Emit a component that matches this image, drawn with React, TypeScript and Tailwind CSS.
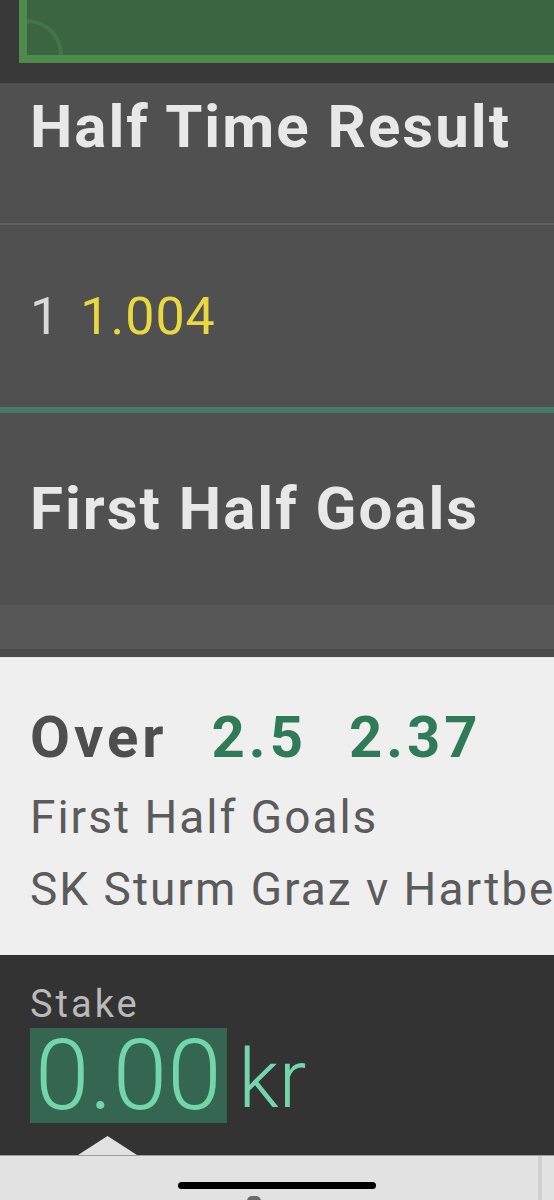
import React from 'react';

const font = { fontFamily: 'Roboto, "Noto Sans", sans-serif' };

function PitchStrip() {
  return (
    <div className="h-[83px] bg-[#383838] pl-[19px]">
      <div className="relative h-[63px] overflow-hidden border-b-[8px] border-l-[8px] border-[#4e8a4a] bg-[#3b6540]">
        <svg className="absolute left-0 bottom-0" width="40" height="40" viewBox="0 0 40 40">
          <path d="M0 6 A34 34 0 0 1 34 40" fill="none" stroke="#46744a" strokeWidth="4" />
        </svg>
      </div>
    </div>
  );
}

function MarketHeader({ title, className }: { title: string; className: string }) {
  return (
    <div className={`px-[30px] ${className}`}>
      <h2 className="text-[60px] leading-[60px] font-bold tracking-[2px] text-[#e8e8e8] whitespace-nowrap">{title}</h2>
    </div>
  );
}

export default function App() {
  return (
    <div className="relative h-[1200px] w-full overflow-hidden bg-[#505050]" style={font}>
      <PitchStrip />

      <MarketHeader title="Half Time Result" className="h-[140px] pt-[14px]" />
      <div className="h-[2px] bg-[#5f5f5f]" />

      <div className="h-[182px] px-[30px] pt-[66px]">
        <p className="text-[52px] leading-[52px] tracking-[1px] whitespace-nowrap">
          <span className="text-[#d9d9d9]">1</span>
          <span className="ml-[20px] text-[#e9d83f]">1.004</span>
        </p>
      </div>
      <div className="h-[6px] bg-[#477b69]" />

      <MarketHeader title="First Half Goals" className="h-[192px] pt-[66px]" />
      <div className="h-[44px] bg-[#575757]" />
      <div className="h-[8px] bg-[#4a4a4a]" />

      {/* bet slip selection */}
      <div className="h-[298px] overflow-hidden border-t border-[#e4e4e4] bg-[#efefef] px-[30px] pt-[50px]">
        <div className="flex items-baseline whitespace-nowrap text-[58px] leading-[58px] font-bold tracking-[4px]">
          <span className="text-[#4e4e4e]">Over</span>
          <span className="ml-[44px] text-[#2f7a57]">2.5</span>
          <span className="ml-[42px] text-[#2f7a57]">2.37</span>
        </div>
        <p className="mt-[15px] text-[46px] leading-[72px] tracking-[2px] text-[#5b5b5b] whitespace-nowrap">First Half Goals</p>
        <p className="text-[46px] leading-[72px] tracking-[2px] text-[#5b5b5b] whitespace-nowrap">SK Sturm Graz v Hartberg</p>
      </div>

      {/* stake input */}
      <div className="relative h-[200px] border-t border-[#2a2a2a] bg-[#333333] px-[30px] pt-[29px]">
        <p className="text-[38px] leading-[38px] tracking-[3px] text-[#b9b9b9]">Stake</p>
        <div className="mt-[5px] flex items-end">
          <span className="bg-[#356651] px-[5px] text-[98px] leading-[95px] font-light text-[#72d6aa]">0.00</span>
          <span className="ml-[12px] mb-[3px] text-[82px] leading-[82px] font-light text-[#72d6aa]">kr</span>
        </div>
        <svg className="absolute left-[78px] bottom-0" width="59" height="19" viewBox="0 0 59 19">
          <polygon points="0,19 29.5,0 59,19" fill="#e2e2e2" />
        </svg>
      </div>

      {/* keyboard top */}
      <div className="relative h-[45px] border-t border-[#9e9e9e] bg-[#e2e2e2]">
        <div className="absolute right-[12px] top-0 h-full w-[4px] bg-[#cfcfcf]" />
        <div className="absolute left-[178px] top-[26px] h-[7px] w-[198px] rounded-full bg-black" />
        <div className="absolute left-[247px] top-[40px] h-[10px] w-[14px] rounded-full bg-[#6a6a6a]" />
      </div>
    </div>
  );
}
